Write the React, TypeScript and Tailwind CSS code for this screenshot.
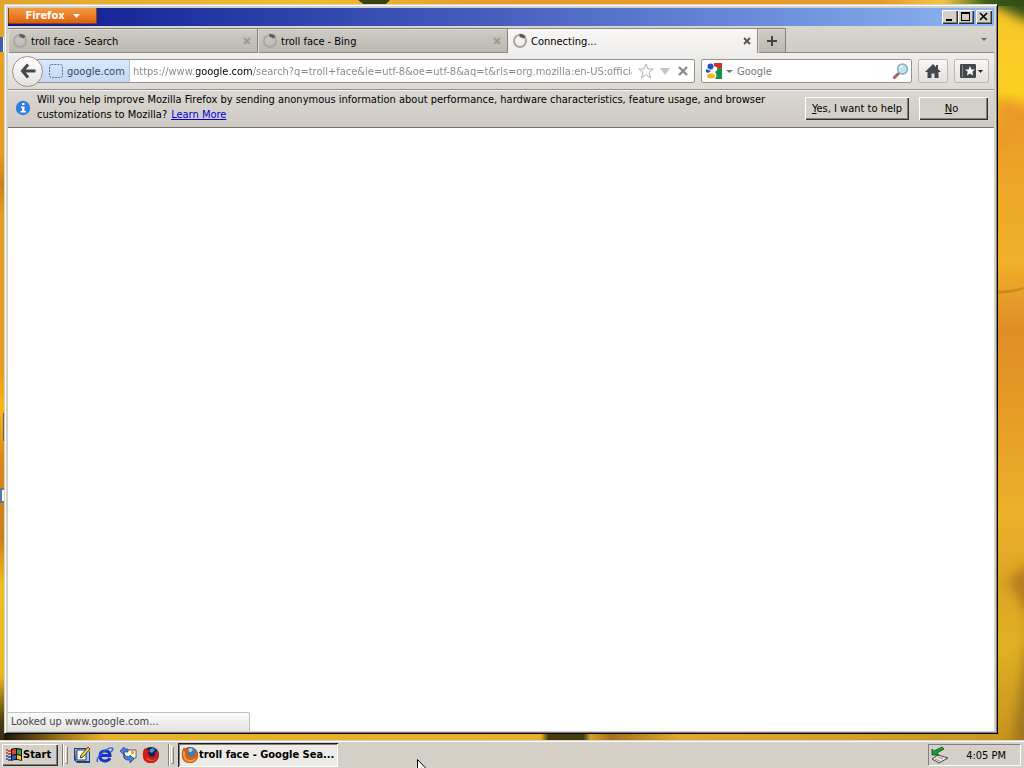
import React, { useEffect } from 'react';

const raised = 'bg-[#d4d0c8] shadow-[inset_1px_1px_0_#ffffff,inset_-1px_-1px_0_#303030,inset_-2px_-2px_0_#808080]';
const toolButton = 'flex h-6 shrink-0 items-center justify-center rounded-xs border border-[#bbb8b3] bg-linear-to-b from-[#f8f7f6] to-[#e3e1de]';

const Wallpaper = () => (
  <svg className="absolute inset-0 h-full w-full" viewBox="0 0 1024 768" preserveAspectRatio="none" aria-hidden="true">
    <defs>
      <linearGradient id="left" x1="0" y1="0" x2="0" y2="1">
        <stop offset="0" stopColor="#e2a52a" />
        <stop offset="0.2" stopColor="#e89c22" />
        <stop offset="0.24" stopColor="#cd811f" />
        <stop offset="0.28" stopColor="#e59c22" />
        <stop offset="0.48" stopColor="#e59c20" />
        <stop offset="0.53" stopColor="#fbb512" />
        <stop offset="0.6" stopColor="#d9861c" />
        <stop offset="0.7" stopColor="#cd8019" />
        <stop offset="0.76" stopColor="#edbd20" />
        <stop offset="0.88" stopColor="#e9b822" />
        <stop offset="0.94" stopColor="#4a3c10" />
        <stop offset="1" stopColor="#151305" />
      </linearGradient>
      <linearGradient id="right" x1="0" y1="0" x2="0" y2="1">
        <stop offset="0" stopColor="#f8c52c" />
        <stop offset="0.12" stopColor="#fbcf22" />
        <stop offset="0.18" stopColor="#eaa026" />
        <stop offset="0.34" stopColor="#f0b02a" />
        <stop offset="0.43" stopColor="#df8e27" />
        <stop offset="0.53" stopColor="#e49b24" />
        <stop offset="0.67" stopColor="#edb02b" />
        <stop offset="0.76" stopColor="#dda424" />
        <stop offset="0.84" stopColor="#e0b024" />
        <stop offset="1" stopColor="#bf8c1d" />
      </linearGradient>
      <linearGradient id="top">
        <stop offset="0" stopColor="#e2a52a" />
        <stop offset="0.3" stopColor="#f0bc2c" />
        <stop offset="0.5" stopColor="#e8992a" />
        <stop offset="0.86" stopColor="#e8992a" />
        <stop offset="0.92" stopColor="#f3c546" />
        <stop offset="0.96" stopColor="#56701f" />
        <stop offset="1" stopColor="#31591c" />
      </linearGradient>
      <linearGradient id="bottom">
        <stop offset="0" stopColor="#1c1808" />
        <stop offset="0.06" stopColor="#a37818" />
        <stop offset="0.1" stopColor="#e8b22a" />
        <stop offset="0.54" stopColor="#e9b02c" />
        <stop offset="0.548" stopColor="#453c12" />
        <stop offset="0.583" stopColor="#453c12" />
        <stop offset="0.59" stopColor="#d9a02a" />
        <stop offset="0.61" stopColor="#a5701d" />
        <stop offset="0.68" stopColor="#e0aa2c" />
        <stop offset="1" stopColor="#c9971f" />
      </linearGradient>
      <filter id="soft" x="-50%" y="-50%" width="200%" height="200%">
        <feGaussianBlur stdDeviation="6" />
      </filter>
    </defs>
    <rect width="512" height="768" fill="url(#left)" />
    <rect x="512" width="512" height="768" fill="url(#right)" />
    <rect width="1024" height="6" fill="url(#top)" />
    <rect x="4" y="730" width="994" height="12" fill="url(#bottom)" />
    <path d="M358 0H390L384 6H366Z" fill="#36430f" />
    <path d="M970 -10L990 3L1034 24V-10Z" fill="#315018" filter="url(#soft)" />
    <path d="M1034 108L996 98V152L1034 130Z" fill="#e99a27" filter="url(#soft)" />
    <path d="M996 291Q1010 291 1024 287V289Q1010 294 996 294Z" fill="#c98a20" />
    <path d="M1034 560L1008 580L1034 625Z" fill="#b47a1b" filter="url(#soft)" />
    <path d="M1034 600L1028 640L1012 745H1034Z" fill="#9d741b" filter="url(#soft)" />
  </svg>
);

const Spinner = () => (
  <svg className="h-4 w-4 shrink-0" viewBox="0 0 16 16" fill="none" aria-hidden="true">
    <circle cx="8" cy="8" r="6" stroke="#aaa8a3" strokeWidth="2" />
    <path d="M7.5 2.5A6 6 0 0 1 12.5 4.5" stroke="#5f5d5a" strokeWidth="3.5" />
  </svg>
);

const Cross = ({ color }: { color: string }) => (
  <svg className="h-2 w-2" viewBox="0 0 8 8" aria-hidden="true">
    <path d="M1 1L7 7M7 1L1 7" stroke={color} strokeWidth="1.8" />
  </svg>
);

const Caret = ({ color, className }: { color: string; className: string }) => (
  <svg className={className} viewBox="0 0 8 5" preserveAspectRatio="none" aria-hidden="true">
    <path d="M0 0H8L4 5Z" fill={color} />
  </svg>
);

const FirefoxIcon = () => (
  <svg className="h-[18px] w-[18px] shrink-0" viewBox="0 0 18 18" aria-hidden="true">
    <circle cx="9" cy="9" r="8" fill="#8a4a24" />
    <circle cx="10" cy="7" r="5.5" fill="#4c7ba8" />
    <path d="M7 3L10 2L12 4L10 6L8 6Z" fill="#a6d5e8" />
    <path d="M3 1L5 4Q8 3 8 5L6 7Q7 10 10 11Q14 11 14 7Q16 8 14 3Q18 7 17 11Q15 17 9 17Q2 17 1 11Q0 5 3 1Z" fill="#d0601a" />
    <path d="M2 5L4 6Q3 13 9 14Q14 14 16 10Q14 16 9 16Q1 15 2 5Z" fill="#f0a040" />
  </svg>
);

const RedFirefoxIcon = () => (
  <svg className="h-[18px] w-[18px]" viewBox="0 0 18 18" aria-hidden="true">
    <circle cx="9" cy="9" r="8" fill="#17205f" />
    <path d="M8 3L11 2L13 4L10 7L8 6Z" fill="#3c9bd0" />
    <path d="M3 2L5 4Q8 3 8 5L6 7Q7 11 10 11Q14 11 13 7L15 4Q18 8 16 12Q14 17 9 17Q2 17 1 11Q0 5 3 2Z" fill="#cf1d16" />
    <path d="M4 11Q8 16 14 13Q12 15 9 15Q5 15 4 11Z" fill="#f26b24" />
  </svg>
);

const tabs = [
  { title: 'troll face - Search', active: false },
  { title: 'troll face - Bing', active: false },
  { title: 'Connecting...', active: true }
];

const TitleBar = () => (
  <div className="flex h-[18px] items-start justify-between bg-linear-to-r from-[#10118f] via-[#485fbe] to-[#8db5f2] pr-0.5">
    <button className="flex h-4 w-[89px] items-center justify-center gap-2 rounded-b-xs border border-t-0 border-[#8c4310] bg-linear-to-b from-[#f39a3f] to-[#de6108] font-bold text-white">
      Firefox
      <Caret color="#fff" className="h-1 w-[7px]" />
    </button>
    <div className="flex pt-0.5">
      <button aria-label="Minimize" className={`h-3.5 w-4 ${raised}`}>
        <svg className="h-3.5 w-4" viewBox="0 0 16 14"><path d="M4 9h6v2H4z" /></svg>
      </button>
      <button aria-label="Maximize" className={`h-3.5 w-4 ${raised}`}>
        <svg className="h-3.5 w-4" viewBox="0 0 16 14"><path d="M3 2h9v9H3zM4 4v6h7V4z" fillRule="evenodd" /></svg>
      </button>
      <button aria-label="Close" className={`ml-0.5 h-3.5 w-4 ${raised}`}>
        <svg className="h-3.5 w-4" viewBox="0 0 16 14"><path d="M4 3L11 10M11 3L4 10" stroke="#000" strokeWidth="1.6" /></svg>
      </button>
    </div>
  </div>
);

const TabStrip = () => (
  <div className="flex h-[27px] items-end bg-linear-to-b from-[#d9d6d0] to-[#cfccc5] shadow-[inset_0_-1px_0_#8f8c87]">
    {tabs.map((tab) => (
      <div
        key={tab.title}
        className={`flex h-[25px] w-[250px] min-w-0 items-center border-t border-r pr-1.5 pl-1 ${
          tab.active
            ? 'border-[#8f8c87] bg-linear-to-b from-[#f8f7f5] to-[#efeeec]'
            : 'border-[#85827d] bg-linear-to-b from-[#cfccc6] to-[#bab7b1] shadow-[inset_1px_1px_0_#dedbd6,inset_0_-1px_0_#8f8c87]'
        }`}
      >
        <Spinner />
        <span className="ml-[3px] flex-1 truncate pt-0.5">{tab.title}</span>
        <button aria-label={`Close ${tab.title}`}>
          <Cross color={tab.active ? '#55524e' : '#9b9893'} />
        </button>
      </div>
    ))}
    <button
      aria-label="New tab"
      className="flex h-[25px] w-7 items-center justify-center border-t border-r border-[#85827d] bg-linear-to-b from-[#cfccc6] to-[#bab7b1] shadow-[inset_1px_1px_0_#dedbd6,inset_0_-1px_0_#8f8c87]"
    >
      <svg className="h-2.5 w-2.5" viewBox="0 0 10 10"><path d="M5 0V10M0 5H10" stroke="#44423f" strokeWidth="2" /></svg>
    </button>
    <button aria-label="List all tabs" className="mr-[7px] mb-3 ml-auto">
      <Caret color="#6d6a66" className="h-[3px] w-1.5" />
    </button>
  </div>
);

const NavigationBar = () => (
  <div className="flex h-9 items-center bg-linear-to-b from-[#efeeec] to-[#dddad6] pr-[5px] pl-1">
    <button aria-label="Back" className="z-10 -mr-2 flex h-[31px] w-[31px] shrink-0 items-center justify-center rounded-full border border-[#96938e] bg-linear-to-b from-white to-[#e4e2df]">
      <svg className="h-4 w-4" viewBox="0 0 16 16" fill="none" stroke="#44474b" strokeWidth="3">
        <path d="M8 1.5L2.5 8L8 14.5M3 8H15.5" />
      </svg>
    </button>
    <div className="flex h-6 min-w-0 flex-1 items-center rounded-xs border border-[#96938e] bg-white">
      <button className="flex h-full w-[94px] shrink-0 items-center gap-1 border-r border-[#aebfd6] bg-linear-to-b from-[#d9e7fa] to-[#c5d9f3] pt-0.5 pl-[13px] text-[#33476e]">
        <svg className="mb-0.5 h-3.5 w-3.5" viewBox="0 0 14 14" aria-hidden="true">
          <rect x="0.5" y="0.5" width="13" height="13" rx="2" fill="none" stroke="#61708c" strokeDasharray="2 1" />
        </svg>
        google.com
      </button>
      <input
        aria-label="Address"
        className="ml-[3px] min-w-0 flex-1 bg-linear-[90deg,#858585_63px,#000_63px,#000_120px,#858585_120px] bg-clip-text pt-0.5 text-transparent outline-none"
        defaultValue="https://www.google.com/search?q=troll+face&ie=utf-8&oe=utf-8&aq=t&rls=org.mozilla:en-US:official&client=firefox-a"
      />
      <div className="flex w-[62px] shrink-0 items-center pl-1.5">
        <button aria-label="Bookmark this page">
          <svg className="h-4 w-4" viewBox="0 0 16 16"><path d="M8 1L10 6H15.3L11 9.4L12.6 15L8 11.7L3.4 15L5 9.4L.7 6H6Z" fill="#fdfdfd" stroke="#b1b1b1" /></svg>
        </button>
        <button aria-label="Show history" className="ml-1.5">
          <Caret color="#c4c4c4" className="h-[7px] w-2.5" />
        </button>
        <button aria-label="Stop" className="ml-2">
          <svg className="h-2.5 w-2.5" viewBox="0 0 10 10"><path d="M1 1L9 9M9 1L1 9" stroke="#8b8b8b" strokeWidth="2.4" /></svg>
        </button>
      </div>
    </div>
    <div className="ml-1.5 flex h-6 w-[211px] shrink-0 items-center rounded-xs border border-[#96938e] bg-white pr-0.5 pl-1">
      <button aria-label="Search engine" className="flex items-center gap-1">
        <svg className="h-4 w-4" viewBox="0 0 16 16" aria-hidden="true">
          <path d="M8 0H16V5H12L8 3Z" fill="#d92b1f" />
          <path d="M16 5V16H9Q12 12 9 9Q12 7 11 5Z" fill="#159447" />
          <circle cx="4.5" cy="3.5" r="3" fill="#2450c5" />
          <path d="M0 6L5 8L2 10L0 9Z" fill="#2450c5" />
          <ellipse cx="5" cy="13" rx="4" ry="2.5" fill="#f3b51e" />
        </svg>
        <Caret color="#77746f" className="h-[3px] w-[7px]" />
      </button>
      <input aria-label="Search" placeholder="Google" className="ml-1 min-w-0 flex-1 pt-0.5 outline-none placeholder:text-[#777777]" />
      <button aria-label="Search Google">
        <svg className="h-[17px] w-[17px]" viewBox="0 0 17 17">
          <path d="M1.5 15.5L7 10" stroke="#a4685a" strokeWidth="3" />
          <circle cx="10.5" cy="6" r="5" fill="#b9e3ee" stroke="#8ba6bb" strokeWidth="1.4" />
          <path d="M8 5Q9 3 11 3" stroke="#fff" strokeWidth="1.4" fill="none" />
        </svg>
      </button>
    </div>
    <button aria-label="Home" className={`ml-1.5 w-[30px] ${toolButton}`}>
      <svg className="h-3.5 w-4" viewBox="0 0 16 14" fill="#44494f"><path d="M8 0L11 3V1H13V5L16 8H13.5V14H9.5V9.5H6.5V14H2.5V8H0Z" /></svg>
    </button>
    <button aria-label="Bookmarks" className={`ml-1.5 w-[35px] gap-0.5 ${toolButton}`}>
      <svg className="h-3.5 w-4" viewBox="0 0 16 14">
        <rect width="16" height="14" rx="1" fill="#44494f" />
        <path d="M2.5 1V13" stroke="#858a8f" />
        <path d="M10 2L11.4 5.5H15L12.2 7.8L13.2 11.5L10 9.4L6.8 11.5L7.8 7.8L5 5.5H8.6Z" fill="#fff" />
      </svg>
      <Caret color="#222" className="h-[3px] w-[5px]" />
    </button>
  </div>
);

const NotificationBar = () => (
  <div className="flex items-center border-t border-b border-t-[#93908b] border-b-[#77746f] bg-linear-to-b from-[#dad6d0] to-[#cfcbc4] pt-0.5 pr-1.5 pb-[3px] pl-[7px] shadow-[inset_0_1px_0_#f4f3f1]">
    <svg className="h-4 w-4 shrink-0" viewBox="0 0 16 16" aria-hidden="true">
      <circle cx="8" cy="8" r="7.2" fill="#2f80dc" />
      <path d="M7 3h2.5v2H7zM6 6.5h3.5V11H11v1.5H5.5V11H7V8H6z" fill="#fff" />
    </svg>
    <p className="ml-1.5 flex-1 pb-0.5 leading-[15px]">
      Will you help improve Mozilla Firefox by sending anonymous information about performance, hardware characteristics,
      feature usage, and browser
      <br />
      customizations to Mozilla?
      <a href="#learn-more" className="ml-1 text-[#0000e0] underline">Learn More</a>
    </p>
    <div className="ml-auto flex shrink-0 gap-2.5">
      <button className={`h-[23px] w-[104px] pt-0.5 ${raised}`}><u>Y</u>es, I want to help</button>
      <button className={`h-[23px] w-[69px] pt-0.5 pr-1 ${raised}`}><u>N</u>o</button>
    </div>
  </div>
);

const Gripper = () => (
  <div className="flex h-[22px] gap-0.5" aria-hidden="true">
    <div className="w-px bg-[#808080] shadow-[1px_0_0_#ffffff]" />
    <div className="my-0.5 w-[3px] border border-t-white border-r-[#808080] border-b-[#808080] border-l-white" />
  </div>
);

const Taskbar = () => (
  <footer className="relative flex h-7 shrink-0 items-center border-t border-[#d4d0c8] bg-[#d4d0c8] pt-px pr-[3px] pl-0.5 shadow-[inset_0_1px_0_#ffffff]">
    <button className={`flex h-[22px] w-14 items-center gap-px pl-1 font-bold ${raised}`}>
      <svg className="h-4 w-4" viewBox="0 0 16 16" aria-hidden="true">
        <path d="M5 2Q10 0 16 2V14Q10 12 5 14Z" fill="#111" />
        <path d="M6 3Q8 2 10 2V7Q8 7 6 8Z" fill="#e04a25" />
        <path d="M11 2L15 3V8L11 7Z" fill="#39a33a" />
        <path d="M6 9Q8 8 10 8V12L6 13Z" fill="#2a5bd0" />
        <path d="M11 8L15 9V13L11 12Z" fill="#f0cf2d" />
        <path d="M0 3H2M2 4H5M0 6H2M2 7H5" stroke="#c73424" strokeWidth="1.5" />
        <path d="M0 9H2M2 10H5M0 12H2M2 13H5" stroke="#2342a8" strokeWidth="1.5" />
      </svg>
      Start
    </button>
    <div className="ml-1"><Gripper /></div>
    <nav aria-label="Quick launch" className="ml-[5px] flex gap-[5px]">
      <button aria-label="Show desktop">
        <svg className="h-[18px] w-[18px]" viewBox="0 0 18 18">
          <path d="M1 2H13L17 6V17H4L1 14Z" fill="#1d3f86" />
          <path d="M2 3H16V15H3Z" fill="#a3c2e4" />
          <path d="M4 4H13V14H4Z" fill="#fff" stroke="#111" strokeWidth="0.8" />
          <path d="M8 9L15 1L17 3L10 11L7 12Z" fill="#f1d43a" stroke="#222" strokeWidth="0.8" />
        </svg>
      </button>
      <button aria-label="Internet Explorer">
        <svg className="h-[18px] w-[18px]" viewBox="0 0 18 18" fill="none">
          <path d="M14 12Q12 15.5 8.5 15Q4 14.5 4 10Q4 5 9 5Q14 5 14 9.5H5" stroke="#1734c4" strokeWidth="3" />
          <path d="M2 16Q-1 14 6 7Q13 1 16 2Q18 3 15 6" stroke="#2a65df" strokeWidth="1.4" />
        </svg>
      </button>
      <button aria-label="Outlook Express">
        <svg className="h-[18px] w-[18px]" viewBox="0 0 18 18">
          <path d="M5 4H17V12H5Z" fill="#fffbe5" stroke="#444" strokeWidth="0.8" />
          <path d="M12 5H15V8H12Z" fill="#e9ab28" />
          <path d="M1 5L5 1V3H9V6H5V9Z" fill="#4b83df" stroke="#173c95" strokeWidth="0.7" />
          <path d="M15 13L11 9V11Q7 11 5 8Q4 15 11 14V17Z" fill="#4b83df" stroke="#173c95" strokeWidth="0.7" />
        </svg>
      </button>
      <button aria-label="Mozilla Firefox"><RedFirefoxIcon /></button>
    </nav>
    <div className="ml-2"><Gripper /></div>
    <button className="ml-1 flex h-6 w-40 items-center bg-[#ecebe8] pl-[3px] font-bold shadow-[inset_1px_1px_0_#202020,inset_-1px_-1px_0_#ffffff,inset_2px_2px_0_#808080]">
      <FirefoxIcon />
      <span className="whitespace-nowrap">troll face - Google Sea...</span>
    </button>
    <div className="ml-auto flex h-[22px] w-[93px] items-center border border-t-[#808080] border-r-white border-b-white border-l-[#808080] pl-0.5">
      <svg className="h-[18px] w-[18px]" viewBox="0 0 18 18" aria-hidden="true">
        <path d="M1 13L7 9L17 12L8 17Z" fill="#e5e3df" stroke="#222" strokeWidth="0.8" />
        <path d="M4 13L9 15M7 11L12 13" stroke="#999" />
        <path d="M1 3L3 5L11 1L13 3L6 7L8 9H1Z" fill="#179e36" stroke="#07501a" strokeWidth="0.8" />
      </svg>
      <time className="mr-3.5 ml-auto pt-0.5">4:05 PM</time>
    </div>
    <svg className="absolute top-[18px] left-[417px] h-5 w-3" viewBox="0 0 12 20" aria-hidden="true">
      <path d="M0.5 0.5V17L4.5 13L7.5 19L9.5 18L7 12H11.5Z" fill="#fff" stroke="#000" />
    </svg>
  </footer>
);

const App: React.FC = () => {
  useEffect(() => {
    document.title = 'Connecting...';
  }, []);

  return (
    <div className="relative flex h-screen flex-col overflow-hidden font-['DejaVu_Sans_Condensed','DejaVu_Sans',sans-serif] text-[11px] leading-[14px] text-black">
      <Wallpaper />

      {/* Desktop icons peeking out from behind the window */}
      <div className="absolute top-[37px] left-0 h-[15px] w-1 border-r border-white bg-[#3b5ea8]" />
      <div className="absolute top-[413px] left-[3px] h-7 w-0.5 bg-[#5d6468]" />
      <div className="absolute top-[488px] left-0 h-[15px] w-1 border-y-2 border-l-2 border-[#5b789c] bg-white" />

      <div className="relative flex min-h-0 flex-1 pt-1 pr-[26px] pb-1.5 pl-1">
        <main className="flex min-w-0 flex-1 flex-col border border-t-[#d4d0c8] border-r-black border-b-black border-l-[#d4d0c8] bg-[#d4d0c8] pt-[3px] pr-[3px] pb-0.5 pl-[3px] shadow-[inset_1px_1px_0_#ffffff,inset_-1px_-1px_0_#808080]">
          <TitleBar />
          <TabStrip />
          <NavigationBar />
          <NotificationBar />
          <section className="relative flex-1 bg-white">
            <div role="status" className="absolute bottom-0 left-0 h-[19px] w-[242px] rounded-tr-xs border-t border-r border-[#c3c1be] bg-linear-to-b from-[#fbfbfb] to-[#e5e4e2] pt-0.5 pl-[3px] text-[#444]">
              Looked up www.google.com...
            </div>
          </section>
        </main>
      </div>

      <Taskbar />
    </div>
  );
};

export default App;
